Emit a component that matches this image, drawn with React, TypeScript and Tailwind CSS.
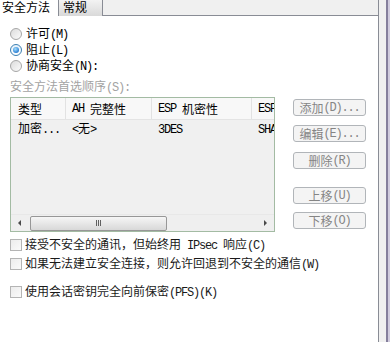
import React from "react";

// ASCII runs get a narrow mono face so they sit at half the CJK width, like SimSun
const T = ({ s }: { s: string }) => (
  <>
    {s.split(/([\x20-\x7e]+)/).map((p, i) =>
      /^[\x20-\x7e]+$/.test(p) ? (
        <span key={i} className="font-['Liberation_Mono',monospace] tracking-[-1.2px]">
          {p}
        </span>
      ) : (
        p
      ),
    )}
  </>
);

function Radio({ label, checked }: { label: string; checked?: boolean }) {
  return (
    <div className="flex items-center h-[16px] whitespace-pre">
      <div
        className={
          checked
            ? "w-[12px] h-[12px] rounded-full border border-[#3c7fb1] bg-gradient-to-b from-[#e6f2fb] to-white flex items-center justify-center"
            : "w-[12px] h-[12px] rounded-full border border-[#a6a6a6] bg-gradient-to-br from-[#dcdcdc] to-[#fbfbfb]"
        }
      >
        {checked && (
          <div className="w-[6px] h-[6px] rounded-full bg-[radial-gradient(circle_at_40%_35%,#a6e1ff,#2b7fd4_70%,#1b5ea8)]" />
        )}
      </div>
      <span className="ml-[4px] text-black">
        <T s={label} />
      </span>
    </div>
  );
}

function Check({ label }: { label: string }) {
  return (
    <div className="flex items-center h-[16px] whitespace-pre">
      <div className="w-[12px] h-[12px] border border-[#b4b4b4] bg-gradient-to-br from-[#ececec] to-[#fafafa]" />
      <span className="ml-[3px] text-[#1a1a1a]">
        <T s={label} />
      </span>
    </div>
  );
}

function Btn({ label }: { label: string }) {
  return (
    <div className="w-[73px] h-[17px] rounded-[3px] border border-[#b1b5b9] bg-[#f4f4f4] text-[#858585] flex items-center justify-center whitespace-pre">
      <T s={label} />
    </div>
  );
}

export default function App() {
  return (
    <div className="w-[390px] h-[342px] bg-[#f0f0f0] flex overflow-hidden font-['Noto_Sans_CJK_SC',sans-serif] text-[12px] leading-[16px]">
      <div className="w-[379px] flex flex-col">
        <div className="flex h-[16px]">
          <div className="w-[58px] bg-white pl-[2px] leading-[14px] text-black">安全方法</div>
          <div className="w-[45px] border-x border-[#898c95] bg-gradient-to-b from-[#f3f3f3] to-[#d9d9d9] pl-[4px] leading-[14px] text-black">
            常规
          </div>
          <div className="flex-1 border-b border-r border-[#898c95]" />
        </div>

        <div className="flex-1 bg-white border-r border-[#898c95] pl-[10px] pt-[10px]">
          <Radio label="许可(M)" />
          <Radio label="阻止(L)" checked />
          <Radio label="协商安全(N):" />
          <div className="mt-[4px] text-[#a3a3a3] whitespace-pre">
            <T s="安全方法首选顺序(S):" />
          </div>

          <div className="flex mt-[1px]">
            <div className="w-[265px] h-[135px] border border-[#a3bba3] bg-[#f0f0f0] flex flex-col overflow-hidden">
              <div className="flex h-[22px] bg-[#f8f8f8] border-b border-[#e4e4e4] whitespace-pre">
                <div className="w-[55px] shrink-0 pl-[7px] flex items-center border-r border-[#e2e2e2]">类型</div>
                <div className="w-[86px] shrink-0 pl-[6px] flex items-center border-r border-[#e2e2e2]">
                  <T s="AH 完整性" />
                </div>
                <div className="w-[100px] shrink-0 pl-[6px] flex items-center border-r border-[#e2e2e2]">
                  <T s="ESP 机密性" />
                </div>
                <div className="shrink-0 pl-[6px] flex items-center">
                  <T s="ESP 完整性" />
                </div>
              </div>
              <div className="flex h-[18px] items-center whitespace-pre">
                <div className="w-[55px] shrink-0 pl-[7px]">
                  <T s="加密..." />
                </div>
                <div className="w-[86px] shrink-0 pl-[6px]">
                  <T s="<无>" />
                </div>
                <div className="w-[100px] shrink-0 pl-[6px]">
                  <T s="3DES" />
                </div>
                <div className="shrink-0 pl-[6px]">
                  <T s="SHA1" />
                </div>
              </div>
              <div className="flex-1" />
              <div className="h-[17px] flex items-center border-t border-[#e8e8e8] bg-[#efefef]">
                <div className="w-[17px] h-full flex items-center justify-center">
                  <div className="border-y-[3px] border-y-transparent border-r-[3px] border-r-[#4a4a4a]" />
                </div>
                <div className="ml-[2px] w-[137px] h-[15px] rounded-[2px] border border-[#979797] bg-gradient-to-b from-[#f6f6f6] to-[#d8d8d8] flex items-center justify-center gap-[1px]">
                  <div className="w-[1px] h-[6px] bg-[#606060]" />
                  <div className="w-[1px] h-[6px] bg-[#606060]" />
                  <div className="w-[1px] h-[6px] bg-[#606060]" />
                </div>
                <div className="flex-1" />
                <div className="w-[17px] h-full flex items-center justify-center">
                  <div className="border-y-[3px] border-y-transparent border-l-[3px] border-l-[#4a4a4a]" />
                </div>
              </div>
            </div>

            <div className="ml-[18px] pt-[2px] flex flex-col">
              <Btn label="添加(D)..." />
              <div className="mt-[9px]">
                <Btn label="编辑(E)..." />
              </div>
              <div className="mt-[10px]">
                <Btn label="删除(R)" />
              </div>
              <div className="mt-[18px]">
                <Btn label="上移(U)" />
              </div>
              <div className="mt-[8px]">
                <Btn label="下移(O)" />
              </div>
            </div>
          </div>

          <div className="mt-[5px]">
            <Check label="接受不安全的通讯，但始终用 IPsec 响应(C)" />
          </div>
          <div className="mt-[3px]">
            <Check label="如果无法建立安全连接，则允许回退到不安全的通信(W)" />
          </div>
          <div className="mt-[12px]">
            <Check label="使用会话密钥完全向前保密(PFS)(K)" />
          </div>
        </div>
      </div>
      <div className="w-[7px]" />
      <div className="w-[2px] bg-[#857f9c]" />
      <div className="flex-1 bg-[#d0cbdd]" />
    </div>
  );
}
